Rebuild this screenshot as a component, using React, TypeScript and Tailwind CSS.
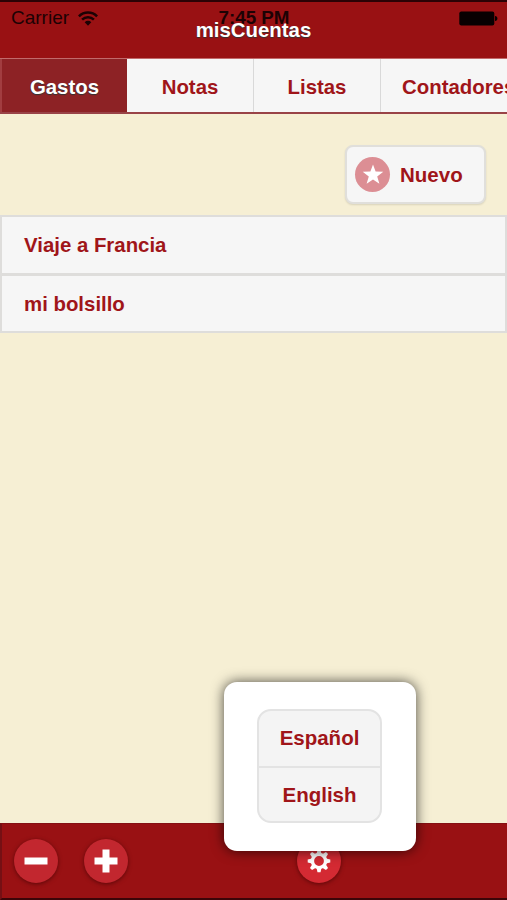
import type { ReactNode } from "react";

const TABS = ["Notas", "Listas"];
const ACCOUNTS = ["Viaje a Francia", "mi bolsillo"];

const TEETH = [0, 45, 90, 135, 180, 225, 270, 315];

function WifiIcon() {
  return (
    <svg width="20" height="15" viewBox="0 0 20 15" fill="none">
      <path d="M.9 5.300a12.900 12.900 0 0 1 18.200 0" stroke="#1c0204" strokeWidth="2.500" />
      <path d="M4.100 8.700a8.300 8.300 0 0 1 11.800 0" stroke="#1c0204" strokeWidth="2.500" />
      <path d="M6.700 11.200a4.600 4.600 0 0 1 6.600 0L10 14.700z" fill="#1c0204" />
    </svg>
  );
}

function BatteryIcon() {
  return (
    <svg width="39" height="15" viewBox="0 0 39 15" fill="#080001">
      <rect x="0.3" y="0.5" width="35" height="14" rx="2" />
      <path d="M36 5c1.6.2 2.4 1.2 2.4 2.5S37.6 9.800 36 10z" />
    </svg>
  );
}

function StarIcon() {
  return (
    <svg width="22" height="22" viewBox="0 0 22 22" fill="#fff">
      <path d="M11 .4l2.6 7.200 7.700.1-6.100 4.700 2.200 7.400L11 15.400l-6.400 4.400 2.200-7.400L.7 7.700l7.700-.1z" />
    </svg>
  );
}

function GearIcon() {
  return (
    <svg width="24" height="24" viewBox="-12 -12 24 24">
      {TEETH.map((angle) => (
        <path
          key={angle}
          d="M-2.500 -7L-1.500 -11.300H1.500L2.500 -7z"
          fill="#fff"
          transform={`rotate(${angle})`}
        />
      ))}
      <circle r="6.600" fill="none" stroke="#fff" strokeWidth="3.400" />
    </svg>
  );
}

function RoundButton({
  label,
  active = false,
  children,
}: {
  label: string;
  active?: boolean;
  children: ReactNode;
}) {
  return (
    <button
      aria-label={label}
      className={`flex size-[44px] shrink-0 items-center justify-center rounded-full shadow-[0_1px_4px_rgba(50,0,0,0.6)] ${
        active ? "bg-[#d42a33]" : "bg-[#c2272f]"
      }`}
    >
      {children}
    </button>
  );
}

function LanguagePopup() {
  return (
    <div className="absolute bottom-[49px] left-[224px] h-[169px] w-[192px] rounded-[13px] bg-white px-[33px] pt-[27px] shadow-[0_0_13px_rgba(0,0,0,0.7)]">
      <div className="flex h-[114px] w-[125px] flex-col overflow-hidden rounded-[14px] border-2 border-[#e3e3e3] bg-[#f4f4f4] text-[20.500px] font-bold text-[#a01519]">
        <button className="h-[57px] border-b-2 border-[#e3e3e3] pb-px">Español</button>
        <button className="flex-1 pt-px">English</button>
      </div>
    </div>
  );
}

export default function App() {
  return (
    <div className="relative flex h-[900px] w-[507px] flex-col overflow-hidden bg-[#f6efd4] font-['Liberation_Sans',Arial,sans-serif]">
      <header className="relative h-[58px] shrink-0 border-t-2 border-[#2b0205] bg-[#991113]">
        <div className="flex h-[32px] items-center justify-between pr-[9px] pl-[11px] text-[19px] text-[#1c0204]">
          <div className="flex w-[170px] items-center gap-[9px]">
            <span className="pt-px">Carrier</span>
            <WifiIcon />
          </div>
          <span className="w-[110px] pt-px pr-px text-center text-[18.800px] font-bold">7:45 PM</span>
          <div className="flex w-[170px] justify-end">
            <BatteryIcon />
          </div>
        </div>
        {/* the title overlaps the status bar */}
        <h1 className="absolute inset-x-0 top-[16px] text-center text-[20.400px] leading-6 font-bold text-white [text-shadow:0_1px_1px_#333]">
          misCuentas
        </h1>
      </header>

      <nav className="flex h-[56px] shrink-0 overflow-hidden border-t border-b-2 border-t-[#c26a6b] border-b-[#994347] bg-[#f6f6f6] text-[20.400px] font-bold text-[#a01519]">
        <button className="w-[127px] shrink-0 border-l-2 border-[#a23d40] bg-[#8d2225] pt-1 text-white [text-shadow:0_1px_1px_#333]">
          Gastos
        </button>
        {TABS.map((tab) => (
          <button
            key={tab}
            className="w-[127px] shrink-0 border-r border-[#d9d9d9] pt-1 first-of-type:pl-px"
          >
            {tab}
          </button>
        ))}
        <button className="shrink-0 pt-1 pl-[21px]">Contadores</button>
      </nav>

      <main className="flex-1">
        <div className="flex justify-end pt-[31px] pr-[21px]">
          <button className="flex h-[59px] w-[141px] items-center rounded-[8px] border-2 border-[#e0dfdb] bg-[#f6f6f6] pl-[8px] shadow-[0_1px_2px_rgba(0,0,0,0.12)]">
            <span className="flex size-[35px] items-center justify-center rounded-full bg-[#dc8e94]">
              <StarIcon />
            </span>
            <span className="pt-px pl-[10px] text-[20.500px] font-bold text-[#a01519]">Nuevo</span>
          </button>
        </div>
        <ul className="mt-[11px] border-x-2 border-t-2 border-[#dedddb] text-[20.400px] font-bold text-[#a01519]">
          {ACCOUNTS.map((name) => (
            <li
              key={name}
              className="flex h-[59px] items-center border-b-[3px] border-[#dedddb] bg-[#f6f6f6] pl-[22px] last:h-[57px] last:border-b-2 last:pt-[2px]"
            >
              {name}
            </li>
          ))}
        </ul>
      </main>

      <footer className="flex h-[77px] shrink-0 items-center border-t border-b-2 border-l-2 border-t-[#851014] border-b-[#3c0508] border-l-[#751014] bg-[#991113] pl-[12px]">
        <RoundButton label="Quitar">
          <svg width="24" height="24" fill="#fff">
            <rect x="0.500" y="8.500" width="23" height="7" />
          </svg>
        </RoundButton>
        <div className="w-[26px]" />
        <RoundButton label="Añadir">
          <svg width="24" height="24" fill="#fff">
            <path d="M8.500 .5h7v8h8v7h-8v8h-7v-8h-8v-7h8z" />
          </svg>
        </RoundButton>
        <div className="w-[169px]" />
        <RoundButton label="Idioma" active>
          <GearIcon />
        </RoundButton>
      </footer>

      <LanguagePopup />
    </div>
  );
}
